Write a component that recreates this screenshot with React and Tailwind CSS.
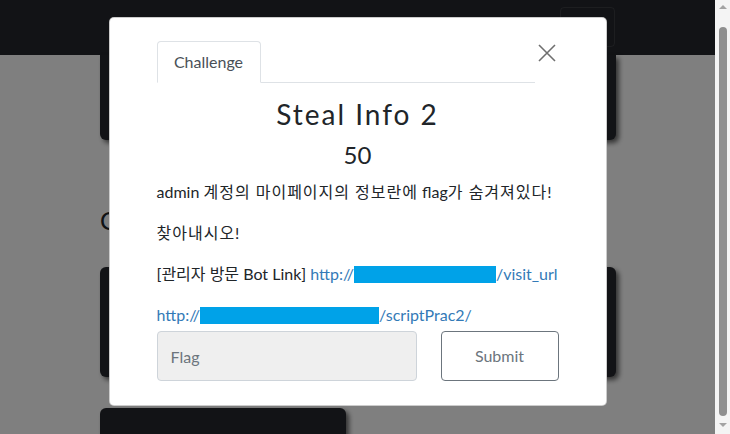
import React from "react";

const font = { fontFamily: "Lato, 'Noto Sans CJK KR', sans-serif" };

// Dark card behind the modal
const Card = ({ className = "" }) => (
  <div
    className={`bg-[#24262c] shadow-[3px_3px_5px_rgba(0,0,0,0.6)] ${className}`}
  />
);

const Redacted = ({ w }) => (
  <span
    className={`inline-block align-[-3px] h-[17px] bg-[#00a2e8] ${w}`}
  />
);

const Ko = ({ children }) => <span className="tracking-[1px]">{children}</span>;

const ChallengeModal = () => {
  return (
    <div className="mx-auto mt-[17px] w-[498px] h-[389px] bg-white rounded-[5px] border border-black/20 px-[47px] pt-[23px] text-[#212529]">
      {/* Tabs + close */}
      <div className="flex items-start">
        <div className="flex-1 flex border-b border-[#dee2e6] h-[42px]">
          <div className="h-[42px] w-[104px] -mb-px border border-[#dee2e6] border-b-white rounded-t-[4px] bg-white flex items-center justify-center text-[16px] text-[#495057]">
            Challenge
          </div>
        </div>
        <button className="w-[24px] h-[24px] flex items-center justify-center">
          <svg width="18" height="18" viewBox="0 0 18 18">
            <path
              d="M1 1 L17 17 M17 1 L1 17"
              stroke="#6f6f6f"
              strokeWidth="1.6"
              fill="none"
            />
          </svg>
        </button>
      </div>

      {/* Title */}
      <div className="mt-[14px] text-center text-[28px] leading-[34px] tracking-[2px]">
        Steal Info 2
      </div>
      <div className="mt-[9px] text-center text-[24px] leading-[29px]">
        50
      </div>

      {/* Description */}
      <div className="mt-[10px] text-[16px] leading-[25px]">
        <p className="mb-4">
          admin <Ko>계정의 마이페이지의 정보란에</Ko> flag<Ko>가 숨겨져있다!</Ko>
        </p>
        <p className="mb-4">
          <Ko>찾아내시오!</Ko>
        </p>
        <p className="mb-4">
          [관리자 방문 Bot Link]{" "}
          <a className="text-[#337ab7]">
            http://<Redacted w="w-[142px]" />/visit_url
          </a>
        </p>
        <p>
          <a className="text-[#337ab7]">
            http://<Redacted w="w-[179px]" />/scriptPrac2/
          </a>
        </p>
      </div>

      {/* Flag form */}
      <div className="mt-[4px] flex gap-[24px]">
        <input
          placeholder="Flag"
          className="w-[260px] h-[50px] rounded-[4px] border border-[#ced4da] bg-[#efefef] px-[13px] text-[16px] placeholder-[#6c757d] outline-none"
          style={font}
        />
        <button className="w-[118px] h-[50px] rounded-[4px] border border-[#6c757d] bg-white text-[16px] text-[#6c757d]">
          Submit
        </button>
      </div>
    </div>
  );
};

export default function App() {
  return (
    <div className="w-[730px] h-[434px] flex overflow-hidden bg-white" style={font}>
      {/* Page */}
      <div className="relative flex-1 overflow-hidden">
        <nav className="h-[55px] bg-[#24262c] flex justify-end pr-[100px] pt-[7px]">
          <div className="w-[55px] h-[40px] rounded-[4px] border border-white/10" />
        </nav>
        <div className="w-[516px] ml-[100px]">
          <div className="grid grid-cols-2 gap-x-[24px]">
            <Card className="h-[85px] rounded-b-[6px]" />
            <Card className="h-[85px] rounded-b-[6px]" />
          </div>
          <h3 className="mt-[65px] mb-[32px] text-[25px] leading-[30px] text-[#212529]">
            Client-side
          </h3>
          <div className="grid grid-cols-2 gap-x-[24px] gap-y-[31px]">
            <Card className="h-[110px] rounded-[6px]" />
            <Card className="h-[110px] rounded-[6px]" />
            <Card className="h-[110px] rounded-[6px]" />
          </div>
        </div>

        {/* Modal overlay */}
        <div className="absolute inset-0 bg-black/50">
          <ChallengeModal />
        </div>
      </div>

      {/* Scrollbar */}
      <div className="w-[15px] bg-[#f4f4f4] flex flex-col items-center">
        <div className="mt-[5px] w-0 h-0 border-x-[4px] border-x-transparent border-b-[4px] border-b-[#a3a3a3]" />
        <div className="mt-[18px] w-[8px] h-[389px] rounded-full bg-[#8f8f8f] ml-px" />
        <div className="mt-[7px] w-0 h-0 border-x-[4px] border-x-transparent border-t-[4px] border-t-[#a3a3a3]" />
      </div>
    </div>
  );
}
